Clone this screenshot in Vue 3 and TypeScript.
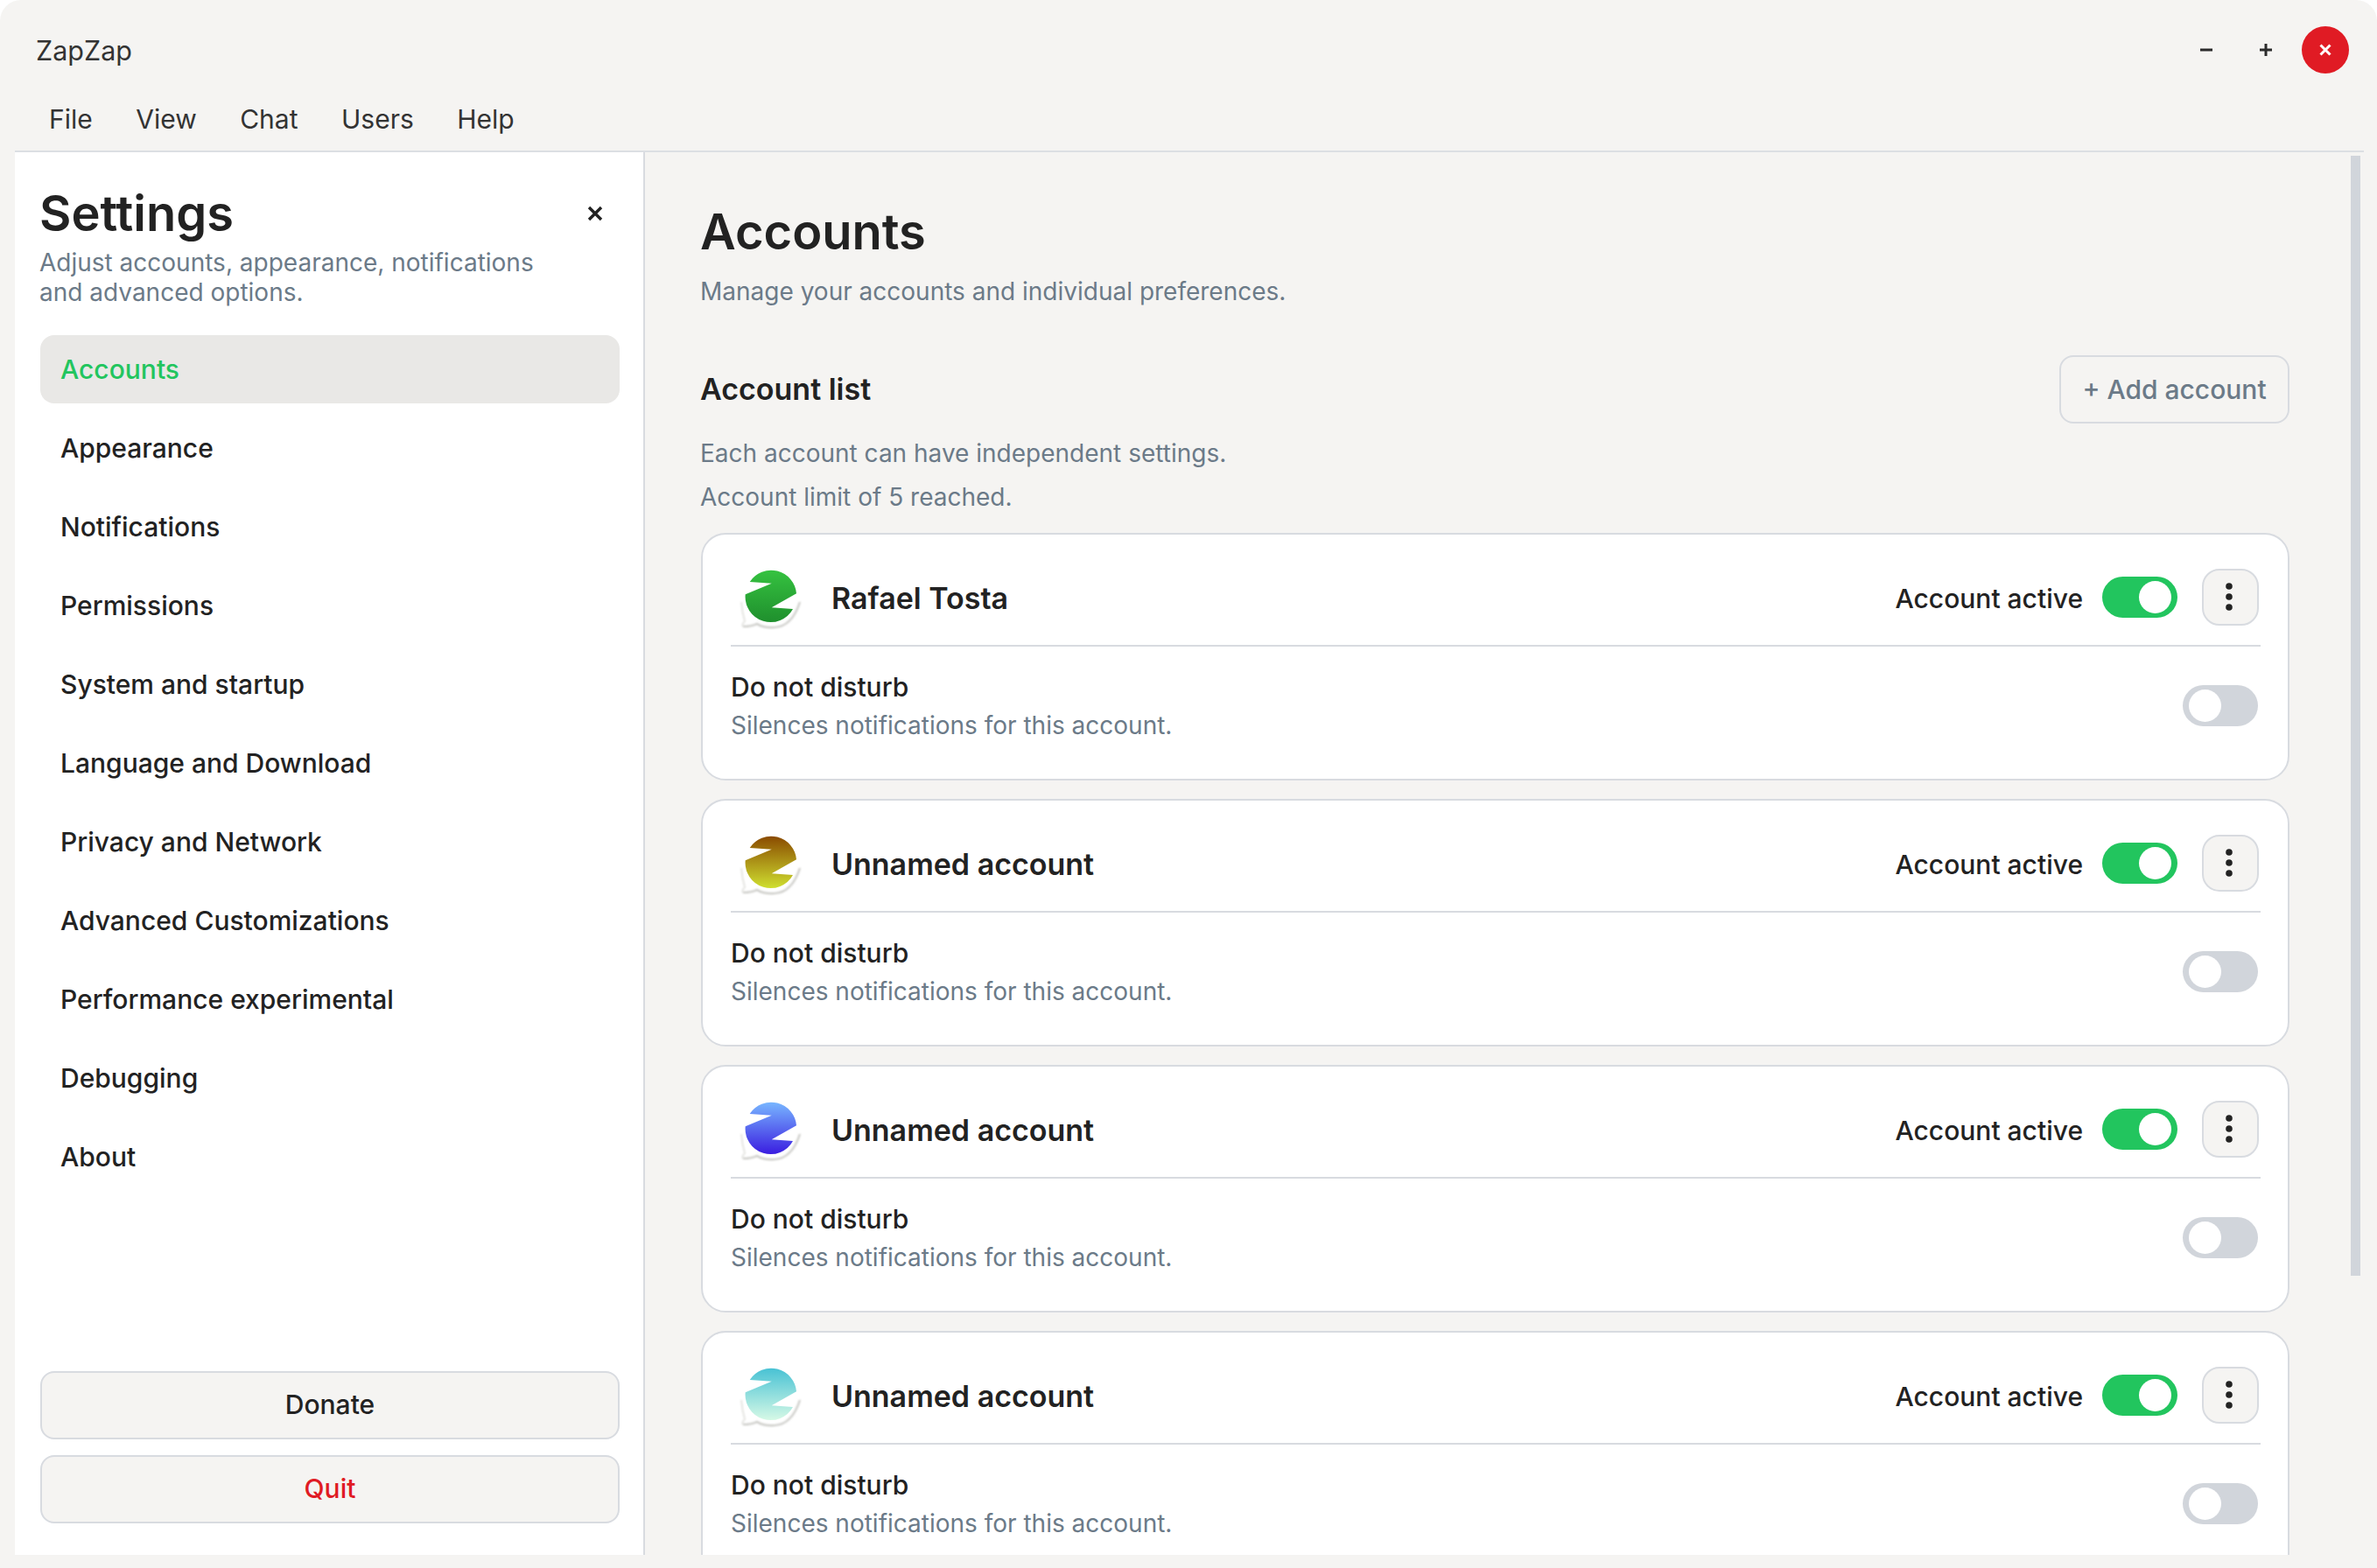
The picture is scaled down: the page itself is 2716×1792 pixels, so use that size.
<script setup lang="ts">
interface Account {
  id: number
  name: string
  top: string
  bottom: string
}

const menus = ['File', 'View', 'Chat', 'Users', 'Help']

const navItems = [
  'Accounts',
  'Appearance',
  'Notifications',
  'Permissions',
  'System and startup',
  'Language and Download',
  'Privacy and Network',
  'Advanced Customizations',
  'Performance experimental',
  'Debugging',
  'About'
]

const accounts: Account[] = [
  { id: 1, name: 'Rafael Tosta', top: '#35c240', bottom: '#1f8f2d' },
  { id: 2, name: 'Unnamed account', top: '#8a4a00', bottom: '#cfdf30' },
  { id: 3, name: 'Unnamed account', top: '#78b6ff', bottom: '#3a1de0' },
  { id: 4, name: 'Unnamed account', top: '#48c2d4', bottom: '#d6f9e6' }
]
</script>

<template>
  <div class="window">
    <header class="titlebar">
      <span class="app-name">ZapZap</span>
      <div class="controls">
        <button class="ctl">
          <svg width="16" height="16" viewBox="0 0 16 16"><path d="M1 8h14" stroke="#2b2b2b" stroke-width="3" /></svg>
        </button>
        <button class="ctl">
          <svg width="16" height="16" viewBox="0 0 16 16"><path d="M1 8h14M8 1v14" stroke="#2b2b2b" stroke-width="3" /></svg>
        </button>
        <button class="ctl ctl-close">
          <svg width="14" height="14" viewBox="0 0 14 14"><path d="M1.5 1.5l11 11M12.5 1.5l-11 11" stroke="#fff" stroke-width="3" /></svg>
        </button>
      </div>
    </header>

    <nav class="menubar">
      <span v-for="m in menus" :key="m">{{ m }}</span>
    </nav>

    <div class="body">
      <aside class="sidebar">
        <div class="side-head">
          <h2>Settings</h2>
          <svg class="side-close" width="18" height="18" viewBox="0 0 18 18"><path d="M2 2l14 14M16 2L2 16" stroke="#222" stroke-width="3.4" /></svg>
        </div>
        <p class="side-sub">Adjust accounts, appearance, notifications<br />and advanced options.</p>

        <ul class="nav">
          <li v-for="(item, i) in navItems" :key="item" :class="{ active: i === 0 }">{{ item }}</li>
        </ul>

        <div class="side-foot">
          <button class="foot-btn">Donate</button>
          <button class="foot-btn quit">Quit</button>
        </div>
      </aside>

      <main class="main">
        <h1>Accounts</h1>
        <p class="lead">Manage your accounts and individual preferences.</p>

        <div class="list-head">
          <h3>Account list</h3>
          <button class="add-btn">+ Add account</button>
        </div>
        <p class="hint first">Each account can have independent settings.</p>
        <p class="hint">Account limit of 5 reached.</p>

        <div class="cards">
          <section v-for="acc in accounts" :key="acc.id" class="card">
            <div class="card-head">
              <svg class="logo" width="75" height="70" viewBox="0 0 75 70">
                <defs>
                  <linearGradient :id="'grad' + acc.id" x1="0" y1="0" x2="0" y2="1">
                    <stop offset="0" :stop-color="acc.top" />
                    <stop offset="1" :stop-color="acc.bottom" />
                  </linearGradient>
                  <filter :id="'soft' + acc.id" x="-10%" y="-10%" width="120%" height="120%">
                    <feGaussianBlur stdDeviation="0.8" />
                  </filter>
                </defs>
                <g fill="none" :filter="'url(#soft' + acc.id + ')'">
                  <path d="M4 38Q5 50 8 60Q4 64 6 66" stroke="#dededa" stroke-width="1.6" />
                  <path d="M6 66Q16 66 22 63Q30 68 42 67Q62 66 71 38" stroke="#c9c9c5" stroke-width="2.2" />
                </g>
                <path
                  d="M13.7 15A29 29 0 0 1 67 28.3L38.7 44.3L63 46A29 29 0 0 1 8.7 29.3L38.7 16.7Z"
                  :fill="'url(#grad' + acc.id + ')'"
                />
              </svg>
              <span class="acc-name">{{ acc.name }}</span>
              <span class="active-label">Account active</span>
              <span class="toggle on"><i></i></span>
              <button class="kebab">
                <svg width="8" height="32" viewBox="0 0 8 32">
                  <circle cx="4" cy="4" r="3.8" />
                  <circle cx="4" cy="16" r="3.8" />
                  <circle cx="4" cy="28" r="3.8" />
                </svg>
              </button>
            </div>
            <div class="card-row">
              <div class="row-text">
                <div class="row-title">Do not disturb</div>
                <div class="row-desc">Silences notifications for this account.</div>
              </div>
              <span class="toggle"><i></i></span>
            </div>
          </section>
        </div>

        <div class="scrollbar"></div>
      </main>
    </div>
  </div>
</template>

<style>
html,
body {
  margin: 0;
  background: #fff;
}
</style>

<style scoped>
* {
  box-sizing: border-box;
}

.window {
  width: 2716px;
  height: 1792px;
  padding: 1px 15px 15px 17px;
  background: #f5f4f2;
  border-radius: 24px 24px 0 0;
  display: flex;
  flex-direction: column;
  overflow: hidden;
  font-family: Inter, 'Noto Sans', sans-serif;
  color: #222;
}

.titlebar {
  height: 112px;
  margin: 0 -15px 0 -17px;
  padding: 0 32px 0 41px;
  display: flex;
  align-items: flex-start;
  justify-content: space-between;
}

.app-name {
  margin-top: 37px;
  font-size: 30.5px;
  line-height: 40px;
  color: #333;
}

.controls {
  display: flex;
  gap: 14px;
  margin-top: 29px;
}

.ctl {
  width: 54px;
  height: 54px;
  padding: 0;
  border: none;
  background: none;
  display: flex;
  align-items: center;
  justify-content: center;
}

.ctl-close {
  background: #e01b24;
  border-radius: 50%;
}

.menubar {
  height: 69px;
  margin-top: -8px;
  padding: 0 0 5px 39px;
  display: flex;
  align-items: center;
  gap: 49.5px;
  font-size: 30px;
  color: #333;
  border-bottom: 2px solid #dcdfe3;
}

.body {
  flex: 1;
  min-height: 0;
  display: flex;
}

.sidebar {
  width: 720px;
  padding: 36px 27px 36px 29px;
  background: #fff;
  border-right: 2px solid #d8dbe0;
  display: flex;
  flex-direction: column;
}

.side-head {
  margin-left: -1px;
  display: flex;
  align-items: center;
  justify-content: space-between;
  padding-right: 19px;
}

.side-head h2 {
  margin: 0;
  font-size: 56px;
  line-height: 68px;
  font-weight: 600;
}

.side-sub {
  margin: 5px 0 32px -1px;
  font-size: 28px;
  line-height: 34px;
  color: #6b7a88;
}

.nav {
  list-style: none;
  margin: 0;
  padding: 0;
  display: flex;
  flex-direction: column;
  gap: 12px;
}

.nav li {
  height: 78px;
  padding-left: 23px;
  display: flex;
  align-items: center;
  font-size: 30px;
  font-weight: 500;
  border-radius: 16px;
}

.nav li.active {
  background: #e9e8e6;
  color: #22c55e;
}

.side-foot {
  margin-top: auto;
  display: flex;
  flex-direction: column;
  gap: 18px;
}

.foot-btn {
  height: 78px;
  padding: 0 0 3px;
  border: 2px solid #d8dbe0;
  border-radius: 16px;
  background: #f5f4f2;
  font: 500 30px Inter, sans-serif;
  color: #222;
}

.foot-btn.quit {
  color: #e01b24;
}

.main {
  position: relative;
  flex: 1;
  min-width: 0;
  padding: 57px 85px 0 64px;
  overflow: hidden;
}

.main h1 {
  margin: 0 0 0 -1px;
  font-size: 56px;
  line-height: 68px;
  font-weight: 600;
}

.lead {
  margin: 16px 0 0 -1px;
  font-size: 28px;
  line-height: 36px;
  color: #6b7a88;
}

.list-head {
  margin-top: 55px;
  display: flex;
  align-items: center;
  justify-content: space-between;
}

.list-head h3 {
  margin: -2px 0 0 -1px;
  font-size: 34px;
  font-weight: 600;
}

.add-btn {
  width: 263px;
  height: 78px;
  border: 2px solid #d8dbe0;
  border-radius: 16px;
  background: #f5f4f2;
  font: 500 30px Inter, sans-serif;
  color: #6b7a88;
}

.hint {
  margin: 16px 0 0 -1px;
  font-size: 28px;
  line-height: 34px;
  color: #6b7a88;
}

.hint.first {
  margin-top: 17px;
}

.cards {
  margin-top: 24px;
  display: flex;
  flex-direction: column;
  gap: 21px;
}

.card {
  height: 283px;
  padding: 0 31px 0 32px;
  background: #fff;
  border: 2px solid #d8dbe0;
  border-radius: 28px;
}

.card-head {
  height: 128px;
  padding-top: 17px;
  display: flex;
  align-items: center;
  border-bottom: 2px solid #d8dbe0;
}

.logo {
  margin-left: 8px;
  margin-top: 5px;
  margin-right: 32px;
  flex: none;
}

.acc-name {
  padding-top: 2px;
  font-size: 34px;
  font-weight: 600;
  flex: 1;
}

.active-label {
  padding-top: 2px;
  font-size: 30px;
  font-weight: 500;
  margin-right: 22px;
}

.toggle {
  width: 86px;
  height: 47px;
  padding: 5px 7px;
  border-radius: 24px;
  background: #d1d5db;
  display: flex;
  flex: none;
}

.toggle i {
  width: 37px;
  height: 37px;
  border-radius: 50%;
  background: #fff;
}

.toggle.on {
  background: #22c55e;
  justify-content: flex-end;
}

.kebab {
  width: 65px;
  height: 65px;
  margin: 0 2px 0 28px;
  padding: 0 4px 2px 0;
  border: 2px solid #d8dbe0;
  border-radius: 20px;
  background: #f5f4f2;
  display: flex;
  align-items: center;
  justify-content: center;
}

.kebab svg {
  fill: #222;
}

.card-row {
  height: 151px;
  padding-right: 3px;
  display: flex;
  align-items: center;
  justify-content: space-between;
}

.row-text {
  margin-top: -15px;
}

.row-title {
  font-size: 30px;
  font-weight: 500;
  line-height: 40px;
}

.row-desc {
  margin-top: 4px;
  font-size: 28px;
  line-height: 40px;
  color: #6b7a88;
}

.card-row .toggle {
  margin-top: -17px;
}

.scrollbar {
  position: absolute;
  top: 4px;
  right: 4px;
  width: 11px;
  height: 1280px;
  background: #d1d5db;
}
</style>
